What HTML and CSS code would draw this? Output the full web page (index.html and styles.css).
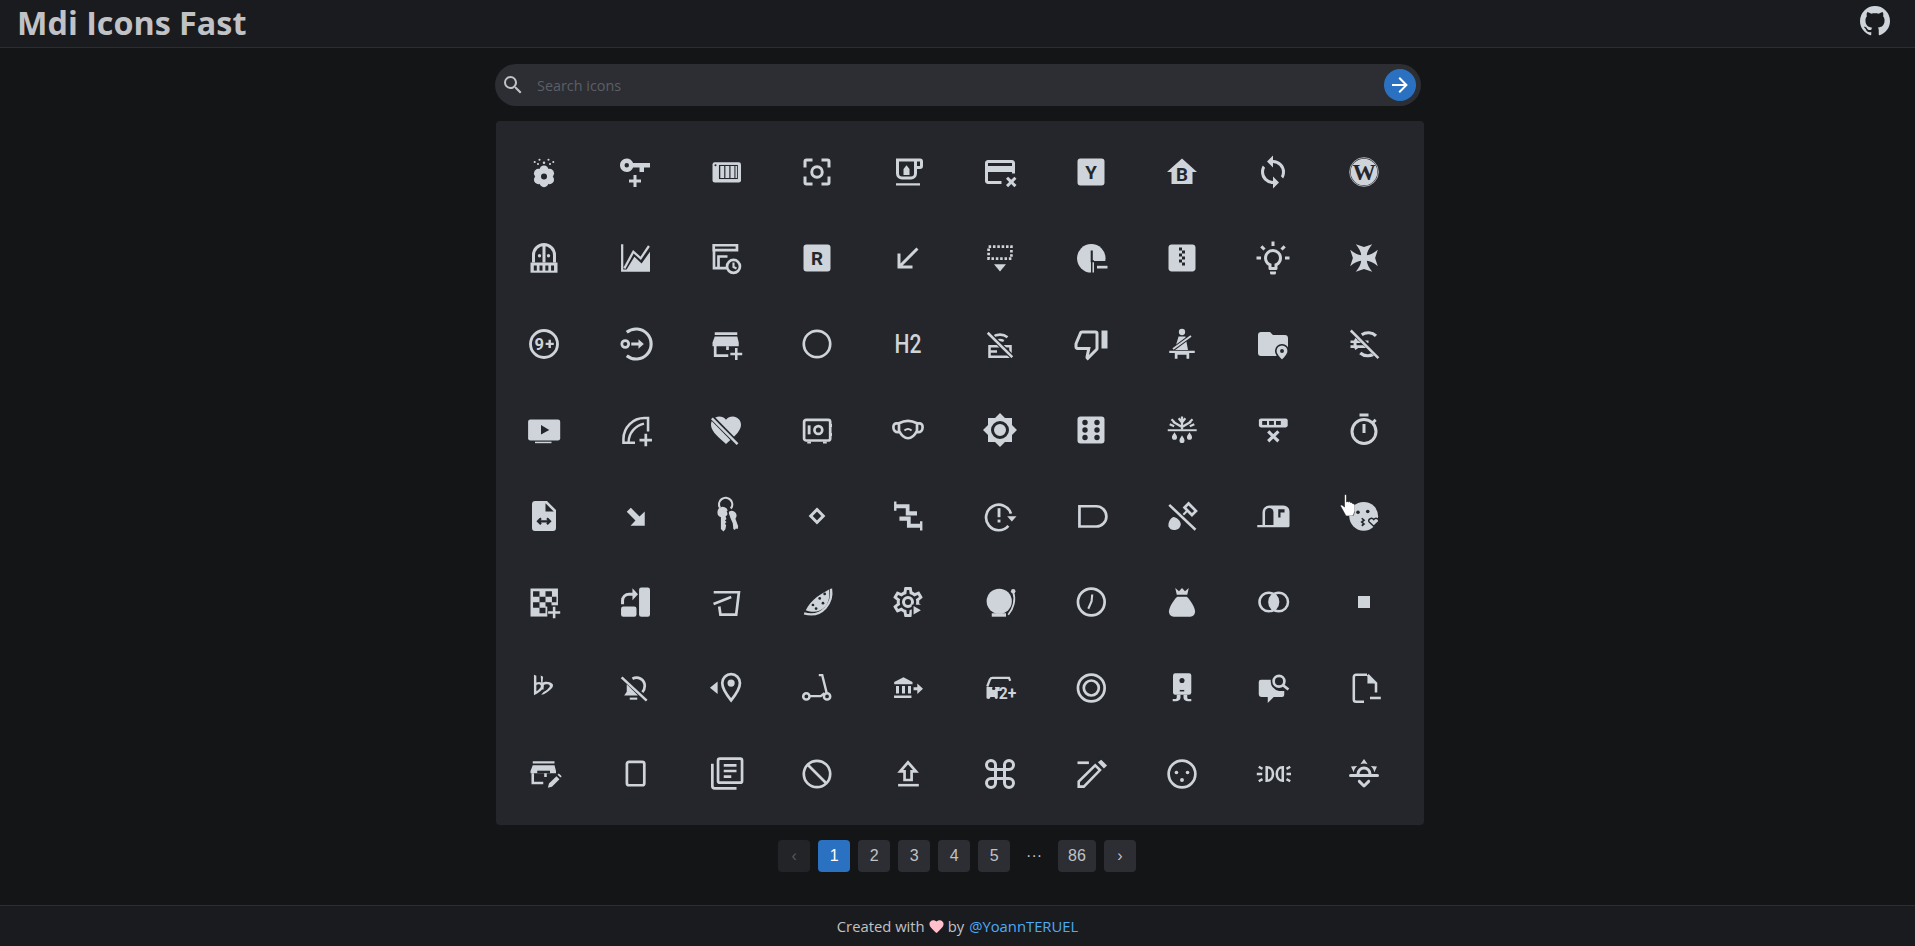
FILE: index.html
```html
<!DOCTYPE html>
<html lang="en">
<head>
<meta charset="utf-8">
<title>Mdi Icons Fast</title>
<link rel="stylesheet" href="styles.css">
</head>
<body>
<div class="page">
<header class="header">
  <h1 class="title">Mdi Icons Fast</h1>
  <a class="github" href="#" aria-label="GitHub"><svg class="gh" viewBox="0 0 24 24"><path d="M12,2A10,10 0 0,0 2,12C2,16.42 4.87,20.17 8.84,21.5C9.34,21.58 9.5,21.27 9.5,21C9.5,20.77 9.5,20.14 9.5,19.31C6.73,19.91 6.14,17.97 6.14,17.97C5.68,16.81 5.03,16.5 5.03,16.5C4.12,15.88 5.1,15.9 5.1,15.9C6.1,15.97 6.63,16.93 6.63,16.93C7.5,18.45 8.97,18 9.54,17.76C9.63,17.11 9.89,16.67 10.17,16.42C7.95,16.17 5.62,15.31 5.62,11.5C5.62,10.39 6,9.5 6.65,8.79C6.55,8.54 6.2,7.5 6.75,6.15C6.75,6.15 7.59,5.88 9.5,7.17C10.29,6.95 11.15,6.84 12,6.84C12.85,6.84 13.71,6.95 14.5,7.17C16.41,5.88 17.25,6.15 17.25,6.15C17.8,7.5 17.45,8.54 17.35,8.79C18,9.5 18.38,10.39 18.38,11.5C18.38,15.32 16.04,16.16 13.81,16.41C14.17,16.72 14.5,17.33 14.5,18.26C14.5,19.6 14.5,20.68 14.5,21C14.5,21.27 14.66,21.59 15.17,21.5C19.14,20.16 22,16.42 22,12A10,10 0 0,0 12,2Z"/></svg></a>
</header>
<main class="main">
<div class="column">
  <form class="search">
    <svg class="search-icon" viewBox="0 0 24 24"><path d="M9.5,3A6.5,6.5 0 0,1 16,9.5C16,11.11 15.41,12.59 14.44,13.73L14.71,14H15.5L20.5,19L19,20.5L14,15.5V14.71L13.73,14.44C12.59,15.41 11.11,16 9.5,16A6.5,6.5 0 0,1 3,9.5A6.5,6.5 0 0,1 9.5,3M9.5,5C7,5 5,7 5,9.5C5,12 7,14 9.5,14C12,14 14,12 14,9.5C14,7 12,5 9.5,5Z"/></svg>
    <input class="search-input" type="text" placeholder="Search icons">
    <button class="search-btn" type="button" aria-label="Search"><svg class="search-arrow" viewBox="0 0 24 24"><path d="M4,11V13H16L10.5,18.5L11.92,19.92L19.84,12L11.92,4.08L10.5,5.5L16,11H4Z"/></svg></button>
  </form>
  <section class="card">
    <div class="grid">
      <div class="cell"><svg class="i" viewBox="0 0 24 24"><circle cx="12" cy="10.7" r="3"/><circle cx="15.7" cy="12.9" r="3"/><circle cx="15.7" cy="17.1" r="3"/><circle cx="12" cy="19.1" r="3"/><circle cx="8.3" cy="17.1" r="3"/><circle cx="8.3" cy="12.9" r="3"/><circle cx="12" cy="15" r="3"/><circle class="d" cx="12" cy="15" r="2"/><circle cx="5.8" cy="5.3" r=".7"/><circle cx="9" cy="3.8" r=".7"/><circle cx="15" cy="3.8" r=".7"/><circle cx="18.2" cy="5.3" r=".7"/><circle cx="8" cy="6.7" r=".7"/><circle cx="12" cy="5.8" r=".8"/><circle cx="16" cy="6.7" r=".7"/></svg></div>
      <div class="cell"><svg class="i" viewBox="0 0 24 24"><path d="M6.5 3C8.46 3 10.13 4.25 10.74 6H22V9H18V12H15V9H10.74C10.13 10.75 8.46 12 6.5 12C4 12 2 10 2 7.5C2 5 4 3 6.5 3M6.5 6A1.5 1.5 0 0 0 5 7.5A1.5 1.5 0 0 0 6.5 9A1.5 1.5 0 0 0 8 7.5A1.5 1.5 0 0 0 6.5 6M8 17H11V14H13V17H16V19H13V22H11V19H8V17Z"/></svg></div>
      <div class="cell"><svg class="i" viewBox="0 0 24 24"><rect x="3" y="5.5" width="19" height="13.5" rx="1.5"/><rect class="d" x="7.3" y="7.3" width="12.6" height="9.4"/><rect x="8.2" y="8" width="2.6" height="8"/><rect x="11.6" y="8" width="2.6" height="8"/><rect x="15" y="8" width="2.6" height="8"/><rect x="18.3" y="8" width="1" height="8"/><circle class="d" cx="5" cy="7.5" r=".7"/></svg></div>
      <div class="cell"><svg class="i" viewBox="0 0 24 24"><path d="M19,19H15V21H19A2,2 0 0,0 21,19V15H19M19,3H15V5H19V9H21V5A2,2 0 0,0 19,3M5,5H9V3H5A2,2 0 0,0 3,5V9H5M5,15H3V19A2,2 0 0,0 5,21H9V19H5V15Z"/><circle class="s" cx="12" cy="12" r="3.5" stroke-width="2"/></svg></div>
      <div class="cell"><svg class="i" viewBox="0 0 24 24"><path d="M4 19.5H20V21H4ZM20 8V5H18V8H20M20 3A2 2 0 0 1 22 5V8A2 2 0 0 1 20 10H18V13A4 4 0 0 1 14 17H8A4 4 0 0 1 4 13V3H20M16 5H6V13A2 2 0 0 0 8 15H14A2 2 0 0 0 16 13V5Z"/><path d="M11 5V7.5L9 10V14H13V10L11 7.5Z"/></svg></div>
      <div class="cell"><svg class="i" viewBox="0 0 24 24"><path d="M20 4H4C2.9 4 2 4.9 2 6V18C2 19.1 2.9 20 4 20H13V18H4V12H20V13H22V6C22 4.9 21.1 4 20 4M20 8H4V6H20V8Z"/><path d="M16 16.5l1.4-1.4 2.1 2.1 2.1-2.1 1.4 1.4-2.1 2.1 2.1 2.1-1.4 1.4-2.1-2.1-2.1 2.1-1.4-1.4 2.1-2.1z"/></svg></div>
      <div class="cell"><svg class="i" viewBox="0 0 24 24"><rect x="3" y="3" width="18" height="18" rx="2"/><text class="gd" x="12" y="16.6" font-size="12.5">Y</text></svg></div>
      <div class="cell"><svg class="i" viewBox="0 0 24 24"><path d="M12 3L2 12H5V20H19V12H22Z"/><text class="gd" x="12" y="17.8" font-size="12.5">B</text></svg></div>
      <div class="cell"><svg class="i" viewBox="0 0 24 24"><path d="M12,18A6,6 0 0,1 6,12C6,11 6.25,10.03 6.7,9.2L5.24,7.74C4.46,8.97 4,10.43 4,12A8,8 0 0,0 12,20V23L16,19L12,15M12,4V1L8,5L12,9V6A6,6 0 0,1 18,12C18,13 17.75,13.97 17.3,14.8L18.76,16.26C19.54,15.03 20,13.57 20,12A8,8 0 0,0 12,4Z"/></svg></div>
      <div class="cell"><svg class="i" viewBox="0 0 24 24"><circle class="s" cx="12" cy="12" r="9.6" stroke-width=".5"/><circle cx="12" cy="12" r="8.9"/><text class="wd" x="12" y="17.5" font-size="15.5">W</text></svg></div>

      <div class="cell"><svg class="i" viewBox="0 0 24 24"><path class="s" d="M5 15V10a7 7 0 0 1 14 0v5M12 3v12" stroke-width="2"/><circle cx="9" cy="10.5" r="1.1"/><circle cx="15" cy="10.5" r="1.1"/><rect x="3" y="15" width="18" height="6.8"/><rect class="d" x="5.2" y="17" width="2" height="3.4"/><rect class="d" x="9" y="17" width="2" height="3.4"/><rect class="d" x="12.9" y="17" width="2" height="3.4"/><rect class="d" x="16.7" y="17" width="2" height="3.4"/></svg></div>
      <div class="cell"><svg class="i" viewBox="0 0 24 24"><path d="M2.7 2.9H4.2V19.6H22V21.1H2.7ZM6.4 19.6L11.6 11.1 16.4 15.6 22 7.8V21.1H6.4Z"/><path class="s" d="M4.9 18.9L10.9 7.8 15.8 12.2 21.3 4" stroke-width="1.5"/></svg></div>
      <div class="cell"><svg class="i" viewBox="0 0 24 24"><path class="s" d="M3.8 3.5h15.5v3.3H3.8ZM4 7.5V18.7H12.5M7 18.7V11H13" stroke-width="1.8"/><circle class="s" cx="17" cy="17.6" r="4.3" stroke-width="1.8"/><path class="s" d="M17 15v3l2 1" stroke-width="1.4"/></svg></div>
      <div class="cell"><svg class="i" viewBox="0 0 24 24"><rect x="3" y="3" width="18" height="18" rx="2"/><text class="gd" x="12" y="16.6" font-size="12.5">R</text></svg></div>
      <div class="cell"><svg class="i" viewBox="0 0 24 24"><path d="M19,6.41L17.59,5L7,15.59V9H5V19H15V17H8.41L19,6.41Z"/></svg></div>
      <div class="cell"><svg class="i" viewBox="0 0 24 24"><rect class="s" x="4.4" y="4.4" width="15.2" height="8" stroke-width="1.8" stroke-dasharray="1.7 1.2"/><path d="M8 16.2H16L12 21Z"/></svg></div>
      <div class="cell"><svg class="i" viewBox="0 0 24 24"><circle cx="12.2" cy="12.2" r="9.5"/><rect class="d" x="14" y="14" width="10" height="10"/><rect x="16" y="17.2" width="7" height="1.8"/><path class="ds" d="M12.5 7V14.2H14" stroke-width="1.4"/><path class="ds" d="M12.5 14.2V22" stroke-width="1"/></svg></div>
      <div class="cell"><svg class="i" viewBox="0 0 24 24"><path d="M14 17H12V15H10V13H12V15H14M14 9H12V11H14V13H12V11H10V9H12V7H10V5H12V7H14M19 3H5C3.89 3 3 3.89 3 5V19C3 20.1 3.9 21 5 21H19C20.1 21 21 20.1 21 19V5C21 3.89 20.1 3 19 3Z"/></svg></div>
      <div class="cell"><svg class="i" viewBox="0 0 24 24"><path d="M20,11H23V13H20V11M1,11H4V13H1V11M13,1V4H11V1H13M4.92,3.5L7.05,5.64L5.63,7.05L3.5,4.93L4.92,3.5M16.95,5.63L19.07,3.5L20.5,4.93L18.36,7.05L16.95,5.63M12,6A6,6 0 0,1 18,12C18,14.22 16.79,16.16 15,17.2V19A1,1 0 0,1 14,20H10A1,1 0 0,1 9,19V17.2C7.21,16.16 6,14.22 6,12A6,6 0 0,1 12,6M14,21V22A1,1 0 0,1 13,23H11A1,1 0 0,1 10,22V21H14M11,18H13V15.87C14.73,15.43 16,13.86 16,12A4,4 0 0,0 12,8A4,4 0 0,0 8,12C8,13.86 9.27,15.43 11,15.87V18Z"/></svg></div>
      <div class="cell"><svg class="i" viewBox="0 0 24 24"><path d="M6.5 2.8L12 4.6 17.5 2.8Q14 7 13.9 10.1 17 10 21.2 6.5L19.4 12 21.2 17.5Q17 14 13.9 13.9 14 17 17.5 21.2L12 19.4 6.5 21.2Q10 17 10.1 13.9 7 14 2.8 17.5L4.6 12 2.8 6.5Q7 10 10.1 10.1 10 7 6.5 2.8Z"/></svg></div>

      <div class="cell"><svg class="i" viewBox="0 0 24 24"><circle class="s" cx="12" cy="12" r="9" stroke-width="1.9"/><text class="g" x="8.8" y="16" font-size="11">9</text><path d="M13.1 11.1h1.9V9.2h1.6v1.9h1.9v1.6h-1.9v1.9H15v-1.9h-1.9z"/></svg></div>
      <div class="cell"><svg class="i" viewBox="0 0 24 24"><path class="s" d="M6.5 4.2A10 10 0 1 1 6.5 19.8" stroke-width="2.1"/><circle class="s" cx="5.5" cy="12" r="2.3" stroke-width="1.8"/><path d="M9.5 11H14.3V8.8L17.9 12 14.3 15.2V13H9.5Z"/></svg></div>
      <div class="cell"><svg class="i" viewBox="0 0 24 24"><path d="M4.5 4.2H19.5V6H4.5ZM4.5 7H19.5L20.5 11V13.5H3V11Z"/><path class="s" d="M4.8 13V19.7H13.5M13 13.5V16" stroke-width="1.8"/><path d="M18 14.7H19.7V17.8H22.8V19.5H19.7V22.6H18V19.5H14.9V17.8H18Z"/></svg></div>
      <div class="cell"><svg class="i" viewBox="0 0 24 24"><circle class="s" cx="12" cy="12" r="8.8" stroke-width="1.8"/></svg></div>
      <div class="cell"><svg class="i" viewBox="0 0 24 24"><text class="g2" x="12" y="18" font-size="17" textLength="18" lengthAdjust="spacingAndGlyphs">H2</text></svg></div>
      <div class="cell"><svg class="i" viewBox="0 0 24 24"><path class="s" d="M7 7.5a8 8 0 0 1 10 0M9.5 10a5 5 0 0 1 5 0" stroke-width="1.7"/><path class="s" d="M5 13.5h14v7H5ZM5 17h5" stroke-width="1.7"/><path class="ds" d="M4 4.5L20 20.5" stroke-width="3.2"/><path class="s" d="M3.8 4.5L20.2 20.8" stroke-width="1.7"/></svg></div>
      <div class="cell"><svg class="i" viewBox="0 0 24 24"><path d="M19,15V3H23V15H19M15,3A2,2 0 0,1 17,5V15C17,15.55 16.78,16.05 16.41,16.41L9.83,23L8.77,21.94C8.5,21.67 8.33,21.3 8.33,20.88L8.36,20.57L9.31,16H3C1.89,16 1,15.1 1,14V12C1,11.74 1.05,11.5 1.14,11.27L4.16,4.22C4.46,3.5 5.17,3 6,3H15M15,5H5.97L3,12V14H11.78L10.65,19.32L15,14.97V5Z"/></svg></div>
      <div class="cell"><svg class="i" viewBox="0 0 24 24"><circle cx="12" cy="4" r="2.1"/><path d="M9.7 7H14.3L16 16H7Z"/><path class="ds" d="M5.5 15.8L18.5 6.2" stroke-width="2.6"/><path class="s" d="M6 15.4L18 6.6" stroke-width="1.2"/><path d="M3.5 16.5H20.5V18H16.8V21.8H15V19.2H9V21.8H7.2V18H3.5Z"/></svg></div>
      <div class="cell"><svg class="i" viewBox="0 0 24 24"><path d="M10 4H4C2.89 4 2 4.89 2 6V18A2 2 0 0 0 4 20H20A2 2 0 0 0 22 18V8C22 6.89 21.1 6 20 6H12L10 4Z"/><path class="d dso" d="M18 12.5a4.2 4.2 0 0 0-4.2 4.2c0 2.8 4.2 6.3 4.2 6.3s4.2-3.5 4.2-6.3a4.2 4.2 0 0 0-4.2-4.2z"/><path d="M18 13a3.6 3.6 0 0 0-3.6 3.6c0 2.4 3.6 5.6 3.6 5.6s3.6-3.2 3.6-5.6A3.6 3.6 0 0 0 18 13z"/><circle class="d" cx="18" cy="16.7" r="1.3"/></svg></div>
      <div class="cell"><svg class="i" viewBox="0 0 24 24"><path class="s" d="M20 6.6A7.5 7.5 0 0 0 10.5 5.8M9.5 18A7.5 7.5 0 0 0 20 17.4" stroke-width="2.1"/><path class="s" d="M3 10.5H15M3 13.8H15" stroke-width="1.8"/><path class="s" d="M7 8.5A7 7 0 0 0 7 15.5" stroke-width="2"/><path class="ds" d="M3.4 2.6L21.4 20.4" stroke-width="3.2"/><path class="s" d="M3.2 3L21.6 21.4" stroke-width="1.7"/></svg></div>

      <div class="cell"><svg class="i" viewBox="0 0 24 24"><rect x="1.4" y="5" width="21.4" height="14" rx="1.5"/><rect x="6" y="19.8" width="11" height="1"/><path class="d" d="M10 8.6L15.5 12 10 15Z"/></svg></div>
      <div class="cell"><svg class="i" viewBox="0 0 24 24"><path class="s" d="M12 20.5H4.3V18A14 14 0 0 1 18.5 4H20.7V13" stroke-width="1.7"/><path class="s" d="M7.7 20A13 13 0 0 1 18 7.7" stroke-width="1.6"/><path d="M18.3 14.5h1.8v3.3h3.2v1.8h-3.2v3.2h-1.8v-3.2H15v-1.8h3.3Z"/></svg></div>
      <div class="cell"><svg class="i" viewBox="0 0 24 24"><path d="M12 21.35l-1.45-1.32C5.4 15.36 2 12.28 2 8.5 2 5.42 4.42 3 7.5 3c1.74 0 3.41.81 4.5 2.09C13.09 3.81 14.76 3 16.5 3 19.58 3 22 5.42 22 8.5c0 3.78-3.4 6.86-8.55 11.54z"/><path class="ds" d="M2 3.2L20.5 22" stroke-width="3.4"/><path class="s" d="M2.6 4.2L19.7 21.4" stroke-width="1.7"/></svg></div>
      <div class="cell"><svg class="i" viewBox="0 0 24 24"><rect class="s" x="3.4" y="5.2" width="17.4" height="13.8" rx="1.4" stroke-width="1.8"/><path d="M5.5 19.7H8V21H5.5ZM16 19.7H18.5V21H16ZM21.2 8H22V10H21.2ZM21.2 14H22V16H21.2Z"/><rect x="5.8" y="8.9" width="1.9" height="6"/><circle class="s" cx="12.9" cy="12" r="2.6" stroke-width="1.8"/></svg></div>
      <div class="cell"><svg class="i" viewBox="0 0 24 24"><path class="s" d="M6 7.5Q12 4.2 18 7.5V12.5Q15.5 17.5 12 17.5T6 12.5ZM6 7.6H4.4A2 2 0 0 0 2.3 9.6V10.5A3 3 0 0 0 5.3 13.5H6.5M18 7.6H19.6A2 2 0 0 1 21.7 9.6V10.5A3 3 0 0 1 18.7 13.5H17.5" stroke-width="1.8"/><path class="s" d="M9.6 12.3Q12 10.5 14.4 12.3" stroke-width="1.3"/></svg></div>
      <div class="cell"><svg class="i" viewBox="0 0 24 24"><path d="M12,8A4,4 0 0,0 8,12A4,4 0 0,0 12,16A4,4 0 0,0 16,12A4,4 0 0,0 12,8M12,18A6,6 0 0,1 6,12A6,6 0 0,1 12,6A6,6 0 0,1 18,12A6,6 0 0,1 12,18M20,8.69V4H15.31L12,0.69L8.69,4H4V8.69L0.69,12L4,15.31V20H8.69L12,23.31L15.31,20H20V15.31L23.31,12L20,8.69Z"/></svg></div>
      <div class="cell"><svg class="i" viewBox="0 0 24 24"><rect x="3" y="3" width="18" height="18" rx="2"/><circle class="d" cx="8" cy="7" r="1.8"/><circle class="d" cx="16" cy="7" r="1.8"/><circle class="d" cx="8" cy="12" r="1.8"/><circle class="d" cx="16" cy="12" r="1.8"/><circle class="d" cx="8" cy="17" r="1.8"/><circle class="d" cx="16" cy="17" r="1.8"/></svg></div>
      <div class="cell"><svg class="i" viewBox="0 0 24 24"><path d="M2.5 11.5H21.8V12.8H2.5Z"/><path class="s" d="M12 11.7V3M12 7L9.8 4.2M12 7L14.2 4.2M12 10L6 6.5M6.8 9.5L3.8 8.2M7 6.8L5 4.8M12 10L18 6.5M17.2 9.5L20.2 8.2M17 6.8L19 4.8" stroke-width="1.5"/><path d="M7 13.5C6 15.2 5.3 15.8 5.3 16.8A1.7 1.7 0 0 0 8.7 16.8C8.7 15.8 8 15.2 7 13.5ZM12 15.5C11 17.2 10.3 18 10.3 19A1.7 1.7 0 0 0 13.7 19C13.7 18 13 17.2 12 15.5ZM17 13.5C16 15.2 15.3 15.8 15.3 16.8A1.7 1.7 0 0 0 18.7 16.8C18.7 15.8 18 15.2 17 13.5Z"/></svg></div>
      <div class="cell"><svg class="i" viewBox="0 0 24 24"><rect x="2.6" y="4.3" width="19.2" height="6" rx="1.4"/><rect class="d" x="4.8" y="6" width="3.2" height="2.6"/><rect class="d" x="9.4" y="6" width="3.2" height="2.6"/><rect class="d" x="14" y="6" width="3.2" height="2.6"/><path class="s" d="M8.8 12.9L15.6 19.5M15.6 12.9L8.8 19.5" stroke-width="2.1"/></svg></div>
      <div class="cell"><svg class="i" viewBox="0 0 24 24"><path d="M12,20A7,7 0 0,1 5,13A7,7 0 0,1 12,6A7,7 0 0,1 19,13A7,7 0 0,1 12,20M19.03,7.39L20.45,5.97C20,5.46 19.55,5 19.04,4.56L17.62,6C16.07,4.74 14.12,4 12,4A9,9 0 0,0 3,13A9,9 0 0,0 12,22C17,22 21,17.97 21,13C21,10.88 20.26,8.93 19.03,7.39M11,14H13V8H11M15,1H9V3H15V1Z"/></svg></div>

      <div class="cell"><svg class="i" viewBox="0 0 24 24"><path d="M13,9V3.5L18.5,9M6,2C4.89,2 4,2.89 4,4V20A2,2 0 0,0 6,22H18A2,2 0 0,0 20,20V8L14,2H6Z"/><path class="ds" d="M8 15.5h8M10 13.5l-2 2 2 2M14 13.5l2 2-2 2" stroke-width="1.5"/></svg></div>
      <div class="cell"><svg class="i" viewBox="0 0 24 24"><path d="M6.5 9.2L9.2 6.5 15 12.3 18.5 9V18.5H9L12.3 15Z"/></svg></div>
      <div class="cell"><svg class="i" viewBox="0 0 24 24"><path class="s" d="M8 6.5A4.4 4.4 0 1 1 15.2 7" stroke-width="1.5"/><path d="M6.3 9.3a3.5 3.5 0 0 1 7 0c0 1.4-.7 2.5-1.6 3.1l.6 1.6-1 1 1 1-1 1.2.8 1-.5 2.6-1.3 1.5-1.7-1.6V12.8A3.5 3.5 0 0 1 6.3 9.3Z"/><path d="M14.3 8.8a3.3 3.3 0 0 1 4 5l1.8 5-.3 1.8-1.2-.2-.7 1-1-.8-.4-3.8-1.7-3.8A3.3 3.3 0 0 1 14.3 8.8Z"/><path class="ds" d="M12.8 8.5L14.5 13" stroke-width=".8"/></svg></div>
      <div class="cell"><svg class="i" viewBox="0 0 24 24"><path class="s" d="M12 7.7L16.2 12 12 16.3 7.8 12Z" stroke-width="2"/></svg></div>
      <div class="cell"><svg class="i" viewBox="0 0 24 24"><path d="M2.7 2.4H4.3V4.1H13V8.9H18V11.7H10.5V6.9H4.3V8.5H2.7ZM21.6 21.6H20V19.9H11.3V15.1H6.3V12.3H13.8V17.1H20V15.5H21.6Z"/></svg></div>
      <div class="cell"><svg class="i" viewBox="0 0 24 24"><path class="s" d="M19.3 10.4A8.5 8.5 0 1 0 17.6 18.6" stroke-width="1.8"/><path d="M16.8 12.2H23L19.9 15.6Z"/><rect x="10.4" y="6.8" width="1.9" height="6"/><rect x="10.4" y="14.4" width="1.9" height="1.9"/></svg></div>
      <div class="cell"><svg class="i" viewBox="0 0 24 24"><path class="s" d="M4.3 5.5H15.5a6.75 6.75 0 0 1 0 13.5H4.3Z" stroke-width="1.8"/></svg></div>
      <div class="cell"><svg class="i" viewBox="0 0 24 24"><path d="M6 12.8C7.5 12.3 11 15 11.2 17.5A4.3 4.3 0 0 1 3 18.8C2.6 16.8 4 13.5 6 12.8Z"/><g transform="rotate(45 17.5 7.5)"><rect class="s" x="14" y="5.6" width="7" height="3.8" stroke-width="1.8"/></g><path d="M11.5 11.5L15 8l1 1-3.5 3.5Z"/><path class="ds" d="M3 3.5L21.5 22" stroke-width="3.2"/><path class="s" d="M3.5 4.6L21 21.2" stroke-width="1.7"/></svg></div>
      <div class="cell"><svg class="i" viewBox="0 0 24 24"><path d="M9.5 5H19a4 4 0 0 1 4 4v9.5a1 1 0 0 1-1 1H1.5V18H5V9.5A4.5 4.5 0 0 1 9.5 5Z"/><path class="d" d="M6.7 18V9.5a2.8 2.8 0 0 1 5.6 0V18Z"/><path class="d" d="M15.5 7.5h4.2v2.2H17V13h-1.5Z"/></svg></div>
      <div class="cell"><svg class="i" viewBox="0 0 24 24"><circle cx="11.8" cy="12.2" r="9.6"/><circle class="d" cx="8" cy="9.5" r="1.2"/><circle class="d" cx="14.5" cy="9" r="1.2"/><path class="ds" d="M10.5 13.5l1.5 1.3-1.5 1.2 1.5 1.3-1.5 1.2" stroke-width="1.1"/><path class="dso" d="M18.5 18.8l-3-2.8c-1.4-1.6 1.5-3.6 3-1.6 1.5-2 4.4 0 3 1.6Z"/></svg></div>

      <div class="cell"><svg class="i" viewBox="0 0 24 24"><rect x="3" y="3" width="18.3" height="18.7"/><path class="d" d="M4.7 4.9h4.3v3.6H4.7ZM13 4.9h4.3v3.6H13ZM9 8.5h4v3.7H9ZM17.3 8.5h3v3.7h-3ZM4.7 12.2H9v3.7H4.7ZM13 12.2h4v2.8h-4ZM9 15.9h4v3.6H9Z"/><rect class="d" x="14.2" y="14.2" width="10" height="9"/><path d="M17.9 15.2h1.7v3h3.2v1.7h-3.2v3h-1.7v-3h-3.2v-1.7h3.2Z"/></svg></div>
      <div class="cell"><svg class="i" viewBox="0 0 24 24"><rect x="14.7" y="2.4" width="7.3" height="19.4" rx="1.5"/><rect x="2.7" y="15" width="10.3" height="6.8" rx="1.5"/><path class="s" d="M3.7 13.5V11A4.3 4.3 0 0 1 8 6.8H11" stroke-width="2"/><path d="M10.3 2.8L14 6.8 10.3 10.8Z"/></svg></div>
      <div class="cell"><svg class="i" viewBox="0 0 24 24"><path class="s" d="M3.8 5.5H20.6L18.8 20.4H8.3L7.5 15" stroke-width="1.8"/><path class="s" d="M3.7 13.3L15.5 8.7" stroke-width="1.7"/></svg></div>
      <div class="cell"><svg class="i" viewBox="0 0 24 24"><path d="M20 3.6C15 6.5 8 10 4.5 17.5 10 19.5 14 18.5 17 15.5 19.8 12.7 20.8 8 20 3.6Z"/><path class="s" d="M21.3 3.2C22.8 12 16 23 3.4 19.6" stroke-width="1.6"/><circle class="d" cx="9.3" cy="14" r=".9"/><circle class="d" cx="13.8" cy="9.6" r=".9"/><circle class="d" cx="17.1" cy="6.6" r=".9"/><circle class="d" cx="11.4" cy="16.4" r=".9"/><circle class="d" cx="16" cy="12.8" r=".9"/></svg></div>
      <div class="cell"><svg class="i" viewBox="0 0 24 24"><path d="M12,8A4,4 0 0,1 16,12A4,4 0 0,1 12,16A4,4 0 0,1 8,12A4,4 0 0,1 12,8M12,10A2,2 0 0,0 10,12A2,2 0 0,0 12,14A2,2 0 0,0 14,12A2,2 0 0,0 12,10M10,22C9.75,22 9.54,21.82 9.5,21.58L9.13,18.93C8.5,18.68 7.96,18.34 7.44,17.94L4.95,18.95C4.73,19.03 4.46,18.95 4.34,18.73L2.34,15.27C2.21,15.05 2.27,14.78 2.46,14.63L4.57,12.97L4.5,12L4.57,11L2.46,9.37C2.27,9.22 2.21,8.95 2.34,8.73L4.34,5.27C4.46,5.05 4.73,4.96 4.95,5.05L7.44,6.05C7.96,5.66 8.5,5.32 9.13,5.07L9.5,2.42C9.54,2.18 9.75,2 10,2H14C14.25,2 14.46,2.18 14.5,2.42L14.87,5.07C15.5,5.32 16.04,5.66 16.56,6.05L19.05,5.05C19.27,4.96 19.54,5.05 19.66,5.27L21.66,8.73C21.79,8.95 21.73,9.22 21.54,9.37L19.43,11L19.5,12L19.43,13L21.54,14.63C21.73,14.78 21.79,15.05 21.66,15.27L19.66,18.73C19.54,18.95 19.27,19.04 19.05,18.95L16.56,17.95C16.04,18.34 15.5,18.68 14.87,18.93L14.5,21.58C14.46,21.82 14.25,22 14,22H10M11.25,4L10.88,6.61C9.68,6.86 8.62,7.5 7.85,8.39L5.44,7.35L4.69,8.65L6.8,10.2C6.4,11.37 6.4,12.64 6.8,13.8L4.68,15.36L5.43,16.66L7.86,15.62C8.63,16.5 9.68,17.14 10.87,17.38L11.24,20H12.76L13.13,17.39C14.32,17.14 15.37,16.5 16.14,15.62L18.57,16.66L19.32,15.36L17.2,13.81C17.6,12.64 17.6,11.37 17.2,10.2L19.31,8.65L18.56,7.35L16.15,8.39C15.38,7.5 14.32,6.86 13.12,6.62L12.75,4H11.25Z"/><rect class="d" x="14.5" y="13.8" width="9" height="8.5"/><path d="M15.7 14.7L20.6 17.5 15.7 20.4Z"/></svg></div>

      <div class="cell"><svg class="i" viewBox="0 0 24 24"><circle cx="11.5" cy="11.5" r="8.4"/><path class="s" d="M20.8 5.3C22.6 10.5 21 16.5 17.5 20.5" stroke-width="1.2"/><circle cx="20.8" cy="4.8" r="1.5"/><rect x="6.5" y="19.5" width="9.5" height="2.3"/></svg></div>
      <div class="cell"><svg class="i" viewBox="0 0 24 24"><circle class="s" cx="12.2" cy="12" r="8.9" stroke-width="1.8"/><path class="s" d="M12.8 7L12.4 11.5 10.2 16.5" stroke-width="1.4"/></svg></div>
      <div class="cell"><svg class="i" viewBox="0 0 24 24"><path d="M7.5 2.6L10 4.8 12 2.6 14 4.8 16.5 2.6 15.5 7.2H8.5Z"/><path d="M8.8 8.5H15.2C18 11 20.7 16 20.7 18.2C20.7 20.5 19.3 21.8 17.5 21.8H6.5C4.7 21.8 3.3 20.5 3.3 18.2C3.3 16 6 11 8.8 8.5Z"/></svg></div>
      <div class="cell"><svg class="i" viewBox="0 0 24 24"><circle class="s" cx="9.2" cy="12" r="6.2" stroke-width="1.7"/><circle class="s" cx="15.8" cy="12" r="6.2" stroke-width="1.7"/><path d="M12.5 6.75A6.2 6.2 0 0 1 12.5 17.25A6.2 6.2 0 0 1 12.5 6.75Z"/></svg></div>
      <div class="cell"><svg class="i" viewBox="0 0 24 24"><rect x="8" y="8" width="8" height="8"/></svg></div>

      <div class="cell"><svg class="i" viewBox="0 0 24 24"><path d="M5.3 3.2L6.9 3.8V8.4C8.2 7.6 11.3 7.5 11.5 10.6 11.6 12.8 8.8 15.1 5.3 16.8ZM6.9 10V14.2C8.4 13.3 9.9 12 9.9 10.7 9.8 9.3 7.8 9.2 6.9 10Z"/><path d="M9.8 3.7L11.4 4.5 11 8.4C12.3 7.5 16 7.4 17.7 9.3 19 11 16.2 13.7 11.8 16.2L10.1 16.5 11.9 14.5C14 13.3 15.9 11.7 15.9 10.6 15.5 9.3 12.8 9.4 11.9 10L11.7 13H10.4Z"/></svg></div>
      <div class="cell"><svg class="i" viewBox="0 0 24 24"><path class="s" d="M10.3 5.8A5.5 5.5 0 0 1 18.5 10.5C18.5 12.5 18 13.6 16.9 14.8" stroke-width="1.8"/><path d="M6.5 9.5L14 17H4.8L6.5 14.5Z"/><path d="M8.5 18.4H13.5V19.8H8.5Z"/><path class="s" d="M3.1 4.9L19.8 20.4" stroke-width="1.7"/></svg></div>
      <div class="cell"><svg class="i" viewBox="0 0 24 24"><path class="s" d="M15.4 2.8a5.9 5.9 0 0 0-5.9 5.9c0 4.3 5.9 11.5 5.9 11.5s5.9-7.2 5.9-11.5a5.9 5.9 0 0 0-5.9-5.9z" stroke-width="1.8"/><circle cx="15.4" cy="8.7" r="2.4"/><path d="M6.4 7.6V16L1.3 11.8Z"/></svg></div>
      <div class="cell"><svg class="i" viewBox="0 0 24 24"><circle class="s" cx="4.9" cy="17.6" r="2.1" stroke-width="1.7"/><circle class="s" cx="18.7" cy="17.6" r="2.1" stroke-width="1.7"/><path class="s" d="M7 17.4H14.5L17 15.4M13.2 3.4H15.5L18.5 15.5" stroke-width="1.6"/></svg></div>
      <div class="cell"><svg class="i" viewBox="0 0 24 24"><path d="M2.8 9.5V8L9 4.8 15 8V9.5ZM4 10.7H6V15.7H4ZM8 10.7H10V15.7H8ZM12 10.7H14V15.7H12ZM2.7 17H14.3V18.7H2.7Z"/><path d="M15.7 11.5H18.2V9L22 12.5 18.2 16V13.5H15.7Z"/></svg></div>
      <div class="cell"><svg class="i" viewBox="0 0 24 24"><path class="s" d="M3.5 11L5.2 6.5Q5.8 5.3 7 5.3H18L18.8 7.3" stroke-width="1.5"/><path d="M3 11.3H11.8V14H10.5V18.5C10.5 19.5 8.5 19.5 8.5 18.5V18H5.5V18.5C5.5 19.5 3 19.5 3 18.5Z"/><circle class="d" cx="7.8" cy="12.3" r="1.1"/><text class="g" x="17" y="19.6" font-size="10.5">2+</text></svg></div>
      <div class="cell"><svg class="i" viewBox="0 0 24 24"><circle class="s" cx="12.2" cy="12" r="8.9" stroke-width="1.8"/><circle class="s" cx="12.2" cy="12" r="5" stroke-width="1.8"/></svg></div>
      <div class="cell"><svg class="i" viewBox="0 0 24 24"><rect x="6" y="2.1" width="12.2" height="14.4" rx="1.5"/><circle class="d" cx="12" cy="7" r="1.7"/><rect class="d" x="10.5" y="13.3" width="3" height="1"/><path d="M8.5 16.5H11V18.5C11 20 9.5 20.8 8 20.8H5.8V19.4H7.5C8.2 19.4 8.5 19 8.5 18.4ZM13 16.5H15.5V18.4C15.5 19 15.8 19.4 16.5 19.4H18.2V20.8H16C14.5 20.8 13 20 13 18.5Z"/></svg></div>
      <div class="cell"><svg class="i" viewBox="0 0 24 24"><path d="M4 6.5H10.5Q10 12.5 16 14H19.5V16.5A1.5 1.5 0 0 1 18 18H12.5L8.5 22V18H4.5A2 2 0 0 1 2.5 16V8A1.5 1.5 0 0 1 4 6.5Z"/><circle class="s" cx="16" cy="7.5" r="3.6" stroke-width="1.8"/><path class="s" d="M18.6 10.1L22.3 13" stroke-width="1.8"/></svg></div>
      <div class="cell"><svg class="i" viewBox="0 0 24 24"><path class="s" d="M14 3.2H6.7A1.5 1.5 0 0 0 5.2 4.7V19.7A1.5 1.5 0 0 0 6.7 21.2H12M14.5 3.3L20 8.8V15" stroke-width="1.7"/><path d="M14.3 3.5V9H19.8Z"/><rect x="16" y="17.8" width="7.2" height="1.7"/></svg></div>

      <div class="cell"><svg class="i" viewBox="0 0 24 24"><path d="M4.5 3.5H19V5H4.5ZM4.5 6.2H19L20 10V11.5H3V10Z"/><path class="d" d="M7.5 9.8H16V11.5H7.5Z"/><path class="s" d="M4.5 11.5V18H11.5M13 11.5V14" stroke-width="1.7"/><path d="M15.3 18.4L20.3 13.5 22.3 15.5 17.3 20.5 14.6 21.2ZM21 12.5L21.9 11.7 23.8 13.5 23 14.3Z"/></svg></div>
      <div class="cell"><svg class="i" viewBox="0 0 24 24"><rect class="s" x="6.6" y="3.9" width="11.6" height="15.6" rx="1.4" stroke-width="1.8"/></svg></div>
      <div class="cell"><svg class="i" viewBox="0 0 24 24"><rect class="s" x="6.7" y="1.8" width="16" height="16" rx="1.2" stroke-width="1.8"/><path class="s" d="M2.9 5.2V20A1.6 1.6 0 0 0 4.5 21.6H19" stroke-width="1.8"/><path class="s" d="M10.5 6.3h8.5M10.5 10h8.5M10.5 13.7h5" stroke-width="1.8"/></svg></div>
      <div class="cell"><svg class="i" viewBox="0 0 24 24"><circle class="s" cx="12" cy="12" r="8.8" stroke-width="1.8"/><path class="s" d="M6 6L18 18" stroke-width="1.8"/></svg></div>
      <div class="cell"><svg class="i" viewBox="0 0 24 24"><path class="s" d="M12 4.2L17.3 10.2H14.4V16H9.7V10.2H6.8Z" stroke-width="1.8"/><rect x="5.4" y="18.6" width="13.8" height="1.7"/></svg></div>
      <div class="cell"><svg class="i" viewBox="0 0 24 24"><path d="M6,2A4,4 0 0,1 10,6V8H14V6A4,4 0 0,1 18,2A4,4 0 0,1 22,6A4,4 0 0,1 18,10H16V14H18A4,4 0 0,1 22,18A4,4 0 0,1 18,22A4,4 0 0,1 14,18V16H10V18A4,4 0 0,1 6,22A4,4 0 0,1 2,18A4,4 0 0,1 6,14H8V10H6A4,4 0 0,1 2,6A4,4 0 0,1 6,2M16,18A2,2 0 0,0 18,20A2,2 0 0,0 20,18A2,2 0 0,0 18,16H16V18M14,10H10V14H14V10M6,16A2,2 0 0,0 4,18A2,2 0 0,0 6,20A2,2 0 0,0 8,18V16H6M8,6A2,2 0 0,0 6,4A2,2 0 0,0 4,6A2,2 0 0,0 6,8H8V6M18,8A2,2 0 0,0 20,6A2,2 0 0,0 18,4A2,2 0 0,0 16,6V8H18Z"/></svg></div>
      <div class="cell"><svg class="i" viewBox="0 0 24 24"><rect x="3" y="3.6" width="7.6" height="1.8"/><path class="s" d="M3.8 20.4V17L14.8 6.2 18 9.4 7.2 20.4Z" stroke-width="1.7"/><path d="M16.6 4.2L18.8 2.5 22.7 6.3 20.6 8.3Z"/></svg></div>
      <div class="cell"><svg class="i" viewBox="0 0 24 24"><circle class="s" cx="12" cy="12" r="8.9" stroke-width="1.8"/><circle cx="8.3" cy="11" r="1.2"/><circle cx="15.7" cy="11" r="1.2"/><circle cx="12" cy="16" r="1.3"/></svg></div>
      <div class="cell"><svg class="i" viewBox="0 0 24 24"><path class="s" d="M7.8 7.5V16.5C10.5 16.5 12 14.5 12 12S10.5 7.5 7.8 7.5ZM18.5 7.5V16.5C16 16.5 14.5 14.5 14.5 12S16 7.5 18.5 7.5Z" stroke-width="1.7"/><path class="s" d="M1.2 12H4.8M2.5 7.2L5 8.6M2.5 16.8L5 15.4M21 12H24M21 8.6L23.5 7.2M21 15.4L23.5 16.8" stroke-width="1.6"/></svg></div>
      <div class="cell"><svg class="i" viewBox="0 0 24 24"><path d="M3,12H7A5,5 0 0,1 12,7A5,5 0 0,1 17,12H21A1,1 0 0,1 22,13A1,1 0 0,1 21,14H3A1,1 0 0,1 2,13A1,1 0 0,1 3,12M15,12A3,3 0 0,0 12,9A3,3 0 0,0 9,12H15M12,2L14.39,5.42C13.65,5.15 12.84,5 12,5C11.16,5 10.35,5.15 9.61,5.42L12,2M3.34,7L7.5,6.65C6.9,7.16 6.36,7.78 5.94,8.5C5.5,9.24 5.25,10 5.11,10.79L3.34,7M20.65,7L18.88,10.79C18.74,10 18.47,9.23 18.05,8.5C17.63,7.78 17.1,7.15 16.5,6.64L20.65,7M12.71,20.71L15.82,17.6C16.21,17.21 16.21,16.57 15.82,16.18C15.43,15.79 14.8,15.79 14.41,16.18L12,18.59L9.59,16.18C9.2,15.79 8.57,15.79 8.18,16.18C7.79,16.57 7.79,17.21 8.18,17.6L11.29,20.71C11.68,21.1 12.32,21.1 12.71,20.71Z"/></svg></div>
    </div>
    <svg class="cursor" viewBox="0 0 15 22"><path d="M4.5 1Q5.5 0 6.5 1V8Q7.5 7 8.5 8Q9.5 7 10.5 8.5Q12 8 12.5 9.5Q14.5 9.5 15 11V17L13 22H6L.5 12Q0 10.5 2 11L4.5 13Z"/></svg>
  </section>
</div>
<nav class="pagination">
  <span class="page-btn faded">‹</span>
  <span class="page-btn active">1</span>
  <span class="page-btn">2</span>
  <span class="page-btn">3</span>
  <span class="page-btn">4</span>
  <span class="page-btn">5</span>
  <span class="page-dots">···</span>
  <span class="page-btn">86</span>
  <span class="page-btn">›</span>
</nav>
</main>
<footer class="footer">
  <span>Created with</span>
  <svg class="heart" viewBox="0 0 24 24"><path d="M12 21.35l-1.45-1.32C5.4 15.36 2 12.28 2 8.5 2 5.42 4.42 3 7.5 3c1.74 0 3.41.81 4.5 2.09C13.09 3.81 14.76 3 16.5 3 19.58 3 22 5.42 22 8.5c0 3.78-3.4 6.86-8.55 11.54z"/></svg>
  <span>by</span>
  <a class="link" href="#">@YoannTERUEL</a>
</footer>
</div>
</body>
</html>
```

FILE: styles.css
```css
* { box-sizing: border-box; }
html, body { margin: 0; height: 100%; }
body {
  background: #141517;
  color: #c1c2c5;
  font-family: "Open Sans", "Noto Sans", sans-serif;
  overflow: hidden;
}
.page { display: flex; flex-direction: column; height: 946px; }
.header {
  height: 48px;
  flex: none;
  display: flex;
  align-items: center;
  justify-content: space-between;
  padding: 0 22px 0 17px;
  background: #1a1b1e;
  border-bottom: 1px solid #2c2e33;
}
.title { margin: 0 0 4px; font-size: 32.3px; line-height: 44px; font-weight: 700; color: #c1c2c5; }
.github { display: flex; color: #ced4da; margin-bottom: 5px; }
.gh { width: 36px; height: 36px; fill: currentColor; }
.main { flex: 1; display: flex; flex-direction: column; align-items: center; padding-left: 5px; }
.column { width: 930px; padding-top: 16px; display: flex; flex-direction: column; }
.search {
  width: 926px;
  height: 42px;
  border-radius: 21px;
  background: #2c2e33;
  display: flex;
  align-items: center;
  padding: 0 5px 0 6px;
}
.search-icon { width: 24px; height: 24px; fill: #c1c2c5; flex: none; }
.search-input {
  flex: 1;
  min-width: 0;
  margin-left: 10px;
  height: 100%;
  background: transparent;
  border: 0;
  outline: 0;
  color: #c1c2c5;
  font: 14.4px "Open Sans", sans-serif;
}
.search-input::placeholder { color: #5c5f66; opacity: 1; }
.search-btn {
  flex: none;
  width: 32px;
  height: 32px;
  padding: 0;
  border: 0;
  border-radius: 50%;
  background: #2b71c1;
  display: flex;
  align-items: center;
  justify-content: center;
}
.search-arrow { width: 24px; height: 24px; fill: #fff; }
.card {
  position: relative;
  margin: 15px 0 0 1px;
  width: 928px;
  height: 704px;
  padding: 8px 14px 7px 2px;
  background: #25262b;
  border-radius: 4px;
}
.grid { display: grid; grid-template-columns: repeat(10, 91.2px); grid-auto-rows: 86px; }
.cell { display: flex; align-items: center; justify-content: center; }
.i { width: 36px; height: 36px; fill: #ced4da; color: #ced4da; overflow: visible; }
.s { fill: none; stroke: currentColor; }
.d { fill: #25262b; }
.ds { fill: none; stroke: #25262b; }
.dso { stroke: #25262b; stroke-width: 1; }
.g, .gd, .g2 { font-family: Roboto, "Liberation Sans", sans-serif; font-weight: 700; text-anchor: middle; }
.g, .g2 { fill: #ced4da; }
.g2 { font-weight: 500; }
.gd { fill: #25262b; }
.wd { fill: #25262b; font-family: "Liberation Serif", serif; font-weight: 700; text-anchor: middle; }
.cursor { position: absolute; left: 844px; top: 373px; width: 15px; height: 22px; fill: #fff; stroke: #222; stroke-width: .6; }
.pagination { margin-top: 15px; padding-right: 6px; display: flex; gap: 8px; align-items: center; }
.page-btn {
  min-width: 32px;
  height: 32px;
  padding: 0 10px;
  display: flex;
  align-items: center;
  justify-content: center;
  border-radius: 4px;
  background: #2c2e33;
  color: #c1c2c5;
  font: 16px "Liberation Sans", Arial, sans-serif;
}
.page-btn.active { background: #2b71c1; color: #fff; }
.page-btn.faded { background: #232428; color: #55575c; }
.page-dots {
  width: 32px;
  height: 32px;
  display: flex;
  align-items: center;
  justify-content: center;
  color: #c1c2c5;
  font: 16px "Liberation Sans", Arial, sans-serif;
}
.footer {
  height: 41px;
  flex: none;
  display: flex;
  align-items: center;
  justify-content: center;
  gap: 3px;
  background: #1a1b1e;
  border-top: 1px solid #2c2e33;
  font-size: 14.8px;
}
.heart { width: 17px; height: 17px; fill: #ffc0cb; flex: none; }
.link { margin-left: 2px; color: #4dabf7; text-decoration: none; }
```
